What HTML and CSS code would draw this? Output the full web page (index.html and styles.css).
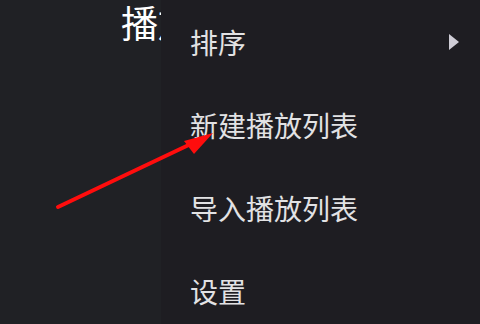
FILE: index.html
```html
<!DOCTYPE html>
<html lang="zh-CN">
<head>
<meta charset="utf-8">
<link rel="stylesheet" href="styles.css">
</head>
<body>
<div class="screen">
  <header class="toolbar">
    <h1 class="title">播放列表</h1>
  </header>
  <ul class="menu">
    <li class="menu-item">排序<span class="submenu-arrow"></span></li>
    <li class="menu-item">新建播放列表</li>
    <li class="menu-item">导入播放列表</li>
    <li class="menu-item">设置</li>
  </ul>
  <svg class="annotation" width="480" height="324" viewBox="0 0 480 324">
    <line x1="58" y1="207" x2="195" y2="142" stroke="#ff0d0d" stroke-width="4" stroke-linecap="round"/>
    <polygon points="213,133 184,141 194,154" fill="#ff0d0d"/>
  </svg>
</div>
</body>
</html>
```
FILE: styles.css
```css
html, body {
  margin: 0;
  padding: 0;
  background: #202125;
}
.screen {
  position: relative;
  width: 480px;
  height: 324px;
  overflow: hidden;
  background: #202125;
  font-family: "Noto Sans CJK SC", "Noto Sans", sans-serif;
}
.toolbar {
  padding: 0 0 0 121px;
  height: 50px;
}
.title {
  margin: 0;
  font-size: 37px;
  font-weight: 400;
  line-height: 44px;
  color: #ffffff;
  white-space: nowrap;
}
.menu {
  position: absolute;
  top: 0;
  left: 161px;
  right: 0;
  bottom: 0;
  margin: 0;
  padding: 0;
  list-style: none;
  background: #1e1d22;
}
.menu-item {
  height: 83px;
  display: flex;
  align-items: center;
  padding-left: 29px;
  padding-right: 21px;
  font-size: 28px;
  color: #e2e2e4;
  box-sizing: border-box;
}
.submenu-arrow {
  margin-left: auto;
  width: 0;
  height: 0;
  border-top: 8px solid transparent;
  border-bottom: 8px solid transparent;
  border-left: 10px solid #cfcdd6;
}
.annotation {
  position: absolute;
  top: 0;
  left: 0;
}
```
